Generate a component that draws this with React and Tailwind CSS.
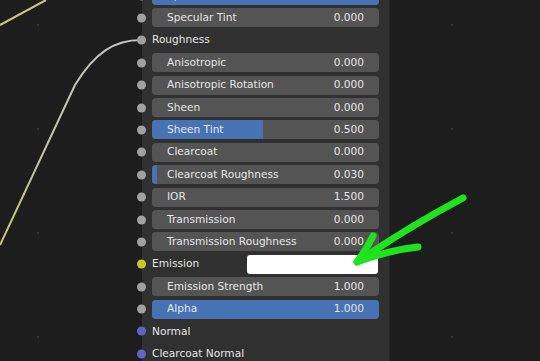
import React from "react";

const rows = [
  { type: "field", label: "Specular", value: "0.500", fill: 1 },
  { type: "field", label: "Specular Tint", value: "0.000" },
  { type: "socket", label: "Roughness" },
  { type: "field", label: "Anisotropic", value: "0.000" },
  { type: "field", label: "Anisotropic Rotation", value: "0.000" },
  { type: "field", label: "Sheen", value: "0.000" },
  { type: "field", label: "Sheen Tint", value: "0.500", fill: 0.49 },
  { type: "field", label: "Clearcoat", value: "0.000" },
  { type: "field", label: "Clearcoat Roughness", value: "0.030", fill: 0.02 },
  { type: "field", label: "IOR", value: "1.500" },
  { type: "field", label: "Transmission", value: "0.000" },
  { type: "field", label: "Transmission Roughness", value: "0.000" },
  { type: "color", label: "Emission", socket: "yellow" },
  { type: "field", label: "Emission Strength", value: "1.000" },
  { type: "field", label: "Alpha", value: "1.000", fill: 1 },
  { type: "socket", label: "Normal", socket: "purple" },
  { type: "socket", label: "Clearcoat Normal", socket: "purple" },
];

const socketColor = {
  gray: "bg-[#a1a1a1]",
  yellow: "bg-[#c7c729]",
  purple: "bg-[#6363c7]",
};

const Socket = ({ kind = "gray" }) => (
  <span
    className={`absolute left-[-5px] top-1/2 -translate-y-1/2 w-[9px] h-[9px] rounded-full ${socketColor[kind]}`}
  />
);

const Row = ({ row }) => {
  if (row.type === "socket") {
    return (
      <div className="relative h-[22.4px] flex items-center pl-[10px]">
        <Socket kind={row.socket} />
        <span>{row.label}</span>
      </div>
    );
  }

  if (row.type === "color") {
    return (
      <div className="relative h-[22.4px] flex items-center pl-[10px] pr-[11px]">
        <Socket kind={row.socket} />
        <span className="flex-1">{row.label}</span>
        <div className="w-[131px] h-[19px] rounded-[3px] bg-white" />
      </div>
    );
  }

  return (
    <div className="relative h-[22.4px] flex items-center pl-[10px] pr-[10px]">
      <Socket />
      <div className="relative flex-1 h-[19px] rounded-[4px] bg-[#545454] overflow-hidden">
        {row.fill ? (
          <div
            className="absolute left-0 top-0 bottom-0 bg-[#4772b3]"
            style={{ width: `${row.fill * 100}%` }}
          />
        ) : null}
        <div className="relative h-full flex items-center justify-between pl-[15px] pr-[15px]">
          <span>{row.label}</span>
          <span>{row.value}</span>
        </div>
      </div>
    </div>
  );
};

const App = () => {
  return (
    <div className="relative w-[540px] h-[361px] overflow-hidden bg-[#1d1d1d] font-['DejaVu_Sans',sans-serif] text-[10.6px] text-[#e6e6e6]">
      {/* grid dots */}
      {[24, 128, 232, 336].map((y) => (
        <React.Fragment key={y}>
          <span
            className="absolute w-[2px] h-[2px] bg-[#333333]"
            style={{ left: 37, top: y }}
          />
          <span
            className="absolute w-[2px] h-[2px] bg-[#333333]"
            style={{ left: 451, top: y }}
          />
        </React.Fragment>
      ))}

      {/* wires */}
      <svg className="absolute inset-0" width="540" height="361">
        <defs>
          <linearGradient id="wire" x1="0" y1="40" x2="0" y2="245" gradientUnits="userSpaceOnUse">
            <stop offset="0" stopColor="#c4c4c4" />
            <stop offset="0.5" stopColor="#c2c2a8" />
            <stop offset="1" stopColor="#c4c470" />
          </linearGradient>
        </defs>
        <path
          d="M141 40 C115 40 95 52 75 85 L0 245"
          fill="none"
          stroke="url(#wire)"
          strokeWidth="2"
        />
        <path d="M0 25 L46 0" fill="none" stroke="#c6c684" strokeWidth="2" />
      </svg>

      {/* node */}
      <div className="relative ml-[142px] w-[248px] h-[400px] -mt-[15.6px] bg-[#303030] border-r border-[#262626]">
        {rows.map((row) => (
          <Row key={row.label} row={row} />
        ))}
      </div>

      {/* annotation arrow */}
      <svg className="absolute inset-0 pointer-events-none" width="540" height="361">
        <g fill="none" stroke="#1ee31e" strokeWidth="7" strokeLinecap="round" strokeLinejoin="round">
          <path d="M463 198 Q410 226 357 262" />
          <path d="M373 236 Q366 250 357 262 Q390 250 418 247" />
        </g>
      </svg>
    </div>
  );
};

export default App;
